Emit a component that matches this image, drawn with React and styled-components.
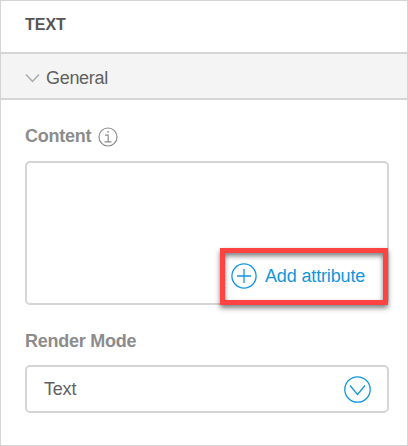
import React from "react";
import styled, { createGlobalStyle } from "styled-components";

const GlobalStyle = createGlobalStyle`
  * { box-sizing: border-box; }
  body { margin: 0; background: #fff; font-family: "Liberation Sans", Arial, sans-serif; }
`;

const Panel = styled.main`
  display: flex;
  flex-direction: column;
  width: 408px;
  height: 446px;
  border: 1px solid #d5d5d5;
  background: #fff;
`;

const PanelHeader = styled.header`
  display: flex;
  align-items: center;
  height: 53px;
  padding: 0 24px 4px;
  border-bottom: 2px solid #d5d5d5;
`;

const Title = styled.h1`
  margin: 0;
  font-size: 16px;
  line-height: 20px;
  color: #555;
`;

const SectionHeader = styled.button`
  display: flex;
  align-items: center;
  gap: 6px;
  height: 46px;
  padding: 3px 24px 0;
  border: 0;
  border-bottom: 2px solid #d5d5d5;
  background: #f4f4f4;
  color: #5f5f5f;
  font: 18px/22px "Liberation Sans", Arial, sans-serif;
  letter-spacing: -0.3px;
`;

const Fields = styled.div`
  display: flex;
  flex-direction: column;
  padding: 25px 18px 0 24px;
`;

const LabelRow = styled.div`
  display: flex;
  align-items: center;
  gap: 7px;
  height: 22px;
  margin-bottom: ${(p) => p.$gap}px;
`;

const Label = styled.label`
  font-size: 18px;
  font-weight: 700;
  line-height: 22px;
  letter-spacing: -0.25px;
  color: #8c8c8c;
`;

const ContentBox = styled.div`
  display: flex;
  align-items: flex-end;
  justify-content: flex-end;
  height: 144px;
  margin-bottom: 25px;
  border: 2px solid #d5d5d5;
  border-radius: 5px;
`;

const AddButton = styled.button`
  display: flex;
  flex: none;
  align-items: center;
  gap: 8px;
  width: 168px;
  height: 57px;
  margin: 0 -1px -2px 0;
  padding: 0 0 2px 6px;
  border: 5px solid #ff4343;
  background: transparent;
  box-shadow: 0 3px 5px rgba(0, 0, 0, 0.5), inset 0 3px 5px rgba(0, 0, 0, 0.5);
  color: #1296db;
  font: 18px/22px "Liberation Sans", Arial, sans-serif;
  letter-spacing: -0.15px;
`;

const Select = styled.div`
  display: flex;
  align-items: center;
  justify-content: space-between;
  height: 48px;
  padding: 0 16px 0 17px;
  border: 2px solid #d5d5d5;
  border-radius: 5px;
  color: #5f5f5f;
  font-size: 18px;
  letter-spacing: -0.2px;
`;

const Icon = styled.svg`
  display: block;
  flex: none;
  fill: none;
  stroke: currentColor;
  stroke-width: ${(p) => p.$weight || 1.3};
  color: ${(p) => p.$color || "#1296db"};
`;

const InfoIcon = styled(Icon)`
  margin-top: 2px;
`;

export default function App() {
  return (
    <>
      <GlobalStyle />
      <Panel>
        <PanelHeader>
          <Title>TEXT</Title>
        </PanelHeader>
        <SectionHeader>
          <Icon width="15" height="10" viewBox="0 0 15 10" $color="#aaa" $weight={1.5}>
            <path d="M1 1.5 7.5 8.5 14 1.5" />
          </Icon>
          General
        </SectionHeader>
        <Fields>
          <LabelRow $gap={14}>
            <Label>Content</Label>
            <InfoIcon width="20" height="20" viewBox="0 0 20 20" $color="#8c8c8c" $weight={1.2}>
              <circle cx="10" cy="10" r="9" />
              <path d="M7 8.2h3.2v6.5M6.5 14.8h7M9.2 4.9h1.8" />
            </InfoIcon>
          </LabelRow>
          <ContentBox>
            <AddButton>
              <Icon width="26" height="26" viewBox="0 0 26 26">
                <circle cx="13" cy="13" r="12.1" />
                <path d="M13 6v14M6 13h14" />
              </Icon>
              Add attribute
            </AddButton>
          </ContentBox>
          <LabelRow $gap={13}>
            <Label>Render Mode</Label>
          </LabelRow>
          <Select>
            Text
            <Icon width="27" height="27" viewBox="0 0 27 27">
              <circle cx="13.5" cy="13.5" r="12.7" />
              <path d="M6 9.5 13.5 18.5 21 9.5" />
            </Icon>
          </Select>
        </Fields>
      </Panel>
    </>
  );
}
